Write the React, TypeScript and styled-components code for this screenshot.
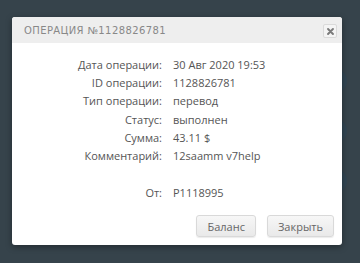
import React from 'react';
import styled, { createGlobalStyle } from 'styled-components';

const GlobalStyle = createGlobalStyle`
  html, body {
    margin: 0;
    padding: 0;
    background: #36434b;
  }
`;

const rows: [string, string][] = [
  ['Дата операции:', '30 Авг 2020 19:53'],
  ['ID операции:', '1128826781'],
  ['Тип операции:', 'перевод'],
  ['Статус:', 'выполнен'],
  ['Сумма:', '43.11 $'],
  ['Комментарий:', '12saamm v7help'],
];

const App: React.FC = () => {
  return (
    <>
      <GlobalStyle />
      <Page>
        <Dots>
          <Dot />
          <Dot />
          <Dot />
        </Dots>
        <Modal>
          <Header>
            <Title>Операция №1128826781</Title>
            <CloseButton aria-label="close">
              <svg width="7" height="7" viewBox="0 0 8 8">
                <path d="M1.2 1.2 L6.8 6.8 M6.8 1.2 L1.2 6.8" stroke="#7a7a7a" strokeWidth="2.2" strokeLinecap="round" />
              </svg>
            </CloseButton>
          </Header>
          <Body>
            <Details>
              {rows.map(([label, value]) => (
                <React.Fragment key={label}>
                  <Label>{label}</Label>
                  <Value>{value}</Value>
                </React.Fragment>
              ))}
              <Spacer />
              <Label>От:</Label>
              <Value>P1118995</Value>
            </Details>
            <Footer>
              <Button>Баланс</Button>
              <Button>Закрыть</Button>
            </Footer>
          </Body>
        </Modal>
      </Page>
    </>
  );
};

const Page = styled.div`
  position: relative;
  width: 360px;
  height: 263px;
  padding: 17px 18px 0 12px;
  box-sizing: border-box;
  overflow: hidden;
  font-family: "DejaVu Sans", "Open Sans", sans-serif;
`;

const Dots = styled.div`
  position: absolute;
  right: 13px;
  top: 69px;
  display: flex;
  flex-direction: column;
  gap: 26px;
`;

const Dot = styled.div`
  width: 24px;
  height: 24px;
  border-radius: 50%;
  background: #314552;
`;

const Modal = styled.div`
  position: relative;
  width: 330px;
  background: #fff;
  border-radius: 3px;
  box-shadow: 0 2px 6px rgba(0, 0, 0, 0.35);
  overflow: hidden;
`;

const Header = styled.div`
  display: flex;
  align-items: center;
  justify-content: space-between;
  height: 26px;
  padding: 0 5px 0 12px;
  background: #eeeeee;
`;

const Title = styled.div`
  font-size: 10px;
  letter-spacing: 0.4px;
  text-transform: uppercase;
  color: #888;
  padding-top: 1px;
`;

const CloseButton = styled.button`
  display: flex;
  align-items: center;
  justify-content: center;
  width: 14px;
  height: 14px;
  padding: 0;
  margin-top: 2px;
  border: 1px solid #dadada;
  border-radius: 2px;
  background: #f4f4f4;
`;

const Body = styled.div`
  padding: 12px 8px 8px;
`;

const Details = styled.div`
  display: grid;
  grid-template-columns: 142px auto;
  column-gap: 11px;
  grid-auto-rows: 18.3px;
  align-items: center;
  font-family: "Open Sans", sans-serif;
  font-size: 11px;
  color: #555;
`;

const Label = styled.div`
  text-align: right;
  white-space: nowrap;
`;

const Value = styled.div`
  white-space: nowrap;
`;

const Spacer = styled.div`
  grid-column: 1 / -1;
`;

const Footer = styled.div`
  display: flex;
  justify-content: flex-end;
  gap: 11px;
  margin-top: 14px;
`;

const Button = styled.button`
  height: 22px;
  padding: 0 10px;
  border: 1px solid #d9d9d9;
  border-radius: 3px;
  background: linear-gradient(#f7f7f7, #e9e9e9);
  font-family: "Open Sans", sans-serif;
  font-size: 11px;
  color: #666;
  box-shadow: 0 1px 1px rgba(0, 0, 0, 0.08);
`;

export default App;
